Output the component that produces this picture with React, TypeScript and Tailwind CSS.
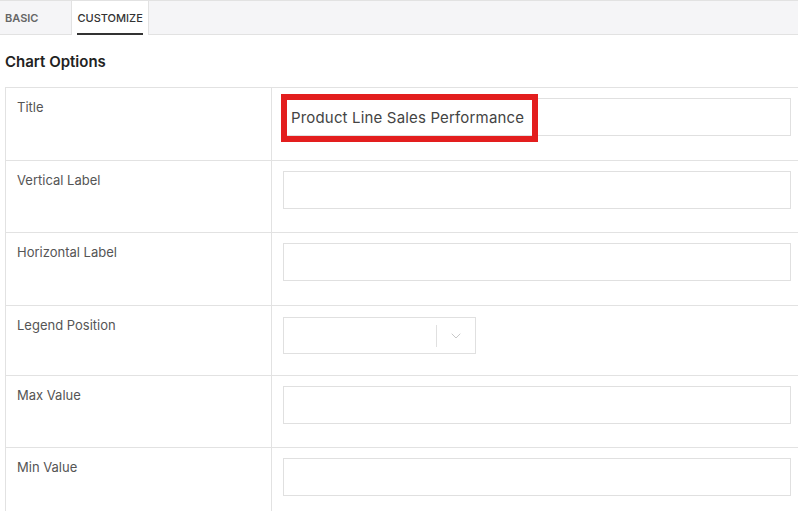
import { ChevronDown } from "lucide-react";

const rows = [
  { label: "Title", kind: "input", value: "Product Line Sales Performance", h: "h-[73px]" },
  { label: "Vertical Label", kind: "input", value: "", h: "h-[72px]" },
  { label: "Horizontal Label", kind: "input", value: "", h: "h-[73px]" },
  { label: "Legend Position", kind: "select", value: "", h: "h-[70px]" },
  { label: "Max Value", kind: "input", value: "", h: "h-[72px]" },
  { label: "Min Value", kind: "input", value: "", h: "h-[72px]" },
];

export default function App() {
  return (
    <div className="h-[511px] w-[798px] overflow-hidden bg-white font-['Inter',sans-serif] text-[#444]">
      <div className="flex h-[35px] border-t border-b border-[#e2e2e2] bg-[#f5f5f7]">
        <div className="flex items-center px-[5px] pt-[2px] text-[11px] font-semibold text-[#666]">BASIC</div>
        <div className="ml-[28px] flex h-[34px] flex-col border-x border-[#e2e2e2] bg-white px-[5px]">
          <div className="flex flex-1 items-center border-b-2 border-[#333] pt-[3px] text-[11px] font-medium text-[#333]">
            CUSTOMIZE
          </div>
        </div>
      </div>

      <h2 className="ml-[5px] mt-[17px] text-[15px] font-semibold leading-[20px] text-[#222]">Chart Options</h2>

      <div className="ml-[5px] mt-[15px] border-t border-l border-[#e2e2e2]">
        {rows.map((row) => (
          <div key={row.label} className={`flex ${row.h} border-b border-[#e2e2e2]`}>
            <div className="w-[266px] shrink-0 border-r border-[#e2e2e2] pl-[11px] pt-[11px] text-[13px] leading-[17px] text-[#555]">
              {row.label}
            </div>
            <div className="relative flex-1 pl-[11px] pt-[10px]">
              {row.kind === "input" ? (
                <div className="flex h-[38px] w-[508px] items-center border border-[#e0e0e0] px-[7px] pt-[2px] text-[15px] tracking-[0.17px] text-[#444]">
                  {row.value}
                </div>
              ) : (
                <div className="mt-[1px] flex h-[37px] w-[193px] items-center justify-end border border-[#e0e0e0]">
                  <div className="h-[22px] w-px bg-[#e0e0e0]" />
                  <ChevronDown className="mx-[11px] h-[16px] w-[16px] text-[#c8c8c8]" strokeWidth={1.5} />
                </div>
              )}
              {row.label === "Title" && (
                <div className="absolute left-[9px] top-[6px] h-[48px] w-[257px] border-[6px] border-[#e31e1e]" />
              )}
            </div>
          </div>
        ))}
      </div>
    </div>
  );
}
